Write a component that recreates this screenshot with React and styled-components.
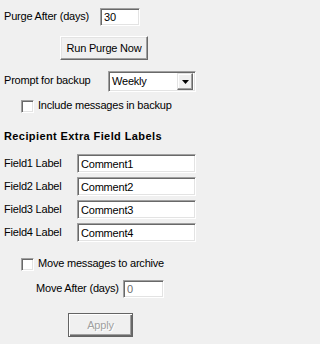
import React from 'react';
import styled, { createGlobalStyle } from 'styled-components';

const GlobalStyle = createGlobalStyle`
  html, body {
    margin: 0;
    padding: 0;
    background: #f0f0f0;
  }
  body {
    font-family: "Liberation Sans", Arial, sans-serif;
    font-size: 11px;
    color: #000;
  }
`;

const Panel = styled.div`
  width: 206px;
  height: 344px;
  box-sizing: border-box;
  padding: 8px 0 0 4px;
  background: #f0f0f0;
  letter-spacing: -0.2px;
  line-height: 13px;
  overflow: hidden;
`;

const Row = styled.div`
  display: flex;
  align-items: flex-start;
  margin-top: ${(p) => p.$top || 0}px;
  padding-left: ${(p) => p.$indent || 0}px;
`;

const Label = styled.span`
  flex: none;
  width: ${(p) => (p.$w ? `${p.$w}px` : 'auto')};
  padding-top: ${(p) => p.$pt || 0}px;
  white-space: nowrap;
`;

const Heading = styled.div`
  margin-top: 17px;
  font-weight: bold;
  letter-spacing: 0.4px;
  white-space: nowrap;
`;

const FieldList = styled.div`
  display: flex;
  flex-direction: column;
  gap: 4px;
  margin-top: 11px;
`;

const TextBox = styled.input`
  flex: none;
  box-sizing: border-box;
  width: ${(p) => p.$w}px;
  height: ${(p) => p.$h || 18}px;
  margin: 0;
  padding: 0 0 0 3px;
  border: 1px solid;
  border-color: #a0a0a0 #fff #fff #a0a0a0;
  box-shadow: inset 1px 1px 0 #696969, inset -1px -1px 0 #e3e3e3;
  background: #fff;
  color: ${(p) => (p.disabled ? '#6d6d6d' : '#000')};
  font: inherit;
  letter-spacing: inherit;
  outline: none;
`;

const Button = styled.button`
  flex: none;
  box-sizing: border-box;
  width: ${(p) => p.$w}px;
  height: 24px;
  margin: 0;
  padding: 0;
  border: 1px solid;
  border-color: #fff #696969 #696969 #fff;
  box-shadow: inset -1px -1px 0 #a0a0a0, inset 1px 1px 0 #e3e3e3;
  background: #f0f0f0;
  color: #000;
  font: inherit;
  letter-spacing: inherit;
`;

const DefaultButton = styled(Button)`
  border-color: #646464;
  box-shadow: inset 1px 1px 0 #fff, inset -1px -1px 0 #696969, inset -2px -2px 0 #a0a0a0;
  color: #a0a0a0;
  text-shadow: 1px 1px 0 #fff;
`;

const Combo = styled.div`
  flex: none;
  display: flex;
  align-items: center;
  box-sizing: border-box;
  width: 88px;
  height: 21px;
  border: 1px solid;
  border-color: #a0a0a0 #fff #fff #a0a0a0;
  box-shadow: inset 1px 1px 0 #696969, inset -1px -1px 0 #e3e3e3;
  background: #fff;
  padding: 1px 2px 1px 1px;
`;

const ComboValue = styled.span`
  flex: 1;
  padding-left: 2px;
`;

const ArrowButton = styled.span`
  flex: none;
  display: flex;
  align-items: center;
  justify-content: center;
  box-sizing: border-box;
  width: 16px;
  height: 17px;
  border: 1px solid;
  border-color: #e3e3e3 #696969 #696969 #e3e3e3;
  box-shadow: inset -1px -1px 0 #a0a0a0, inset 1px 1px 0 #fff;
  background: #f0f0f0;
`;

const CheckRow = styled.label`
  display: flex;
  align-items: flex-start;
  gap: 4px;
  margin-top: ${(p) => p.$top}px;
  padding-left: 17px;
  white-space: nowrap;
`;

const CheckBox = styled.span`
  flex: none;
  box-sizing: border-box;
  width: 13px;
  height: 13px;
  margin-top: 1px;
  border: 1px solid;
  border-color: #a0a0a0 #fff #fff #a0a0a0;
  box-shadow: inset 1px 1px 0 #696969, inset -1px -1px 0 #e3e3e3;
  background: #fff;
`;

const fields = ['Comment1', 'Comment2', 'Comment3', 'Comment4'];

export default function App() {
  return (
    <>
      <GlobalStyle />
      <Panel>
        <Row>
          <Label $w={96} $pt={2}>Purge After (days)</Label>
          <TextBox $w={40} defaultValue="30" readOnly />
        </Row>

        <Row $top={10} $indent={56}>
          <Button $w={88}>Run Purge Now</Button>
        </Row>

        <Row $top={11}>
          <Label $w={104} $pt={3}>Prompt for backup</Label>
          <Combo>
            <ComboValue>Weekly</ComboValue>
            <ArrowButton>
              <svg width="7" height="4" viewBox="0 0 7 4">
                <path d="M0 0h7L3.5 4z" fill="#000" />
              </svg>
            </ArrowButton>
          </Combo>
        </Row>

        <CheckRow $top={7}>
          <CheckBox />
          Include messages in backup
        </CheckRow>

        <Heading>Recipient Extra Field Labels</Heading>

        <FieldList>
          {fields.map((value, i) => (
            <Row key={value}>
              <Label $w={73} $pt={3}>Field{i + 1} Label</Label>
              <TextBox $w={119} $h={19} defaultValue={value} readOnly />
            </Row>
          ))}
        </FieldList>

        <CheckRow $top={15}>
          <CheckBox />
          Move messages to archive
        </CheckRow>

        <Row $top={9} $indent={32}>
          <Label $w={87} $pt={2}>Move After (days)</Label>
          <TextBox $w={41} defaultValue="0" disabled />
        </Row>

        <Row $top={15} $indent={64}>
          <DefaultButton $w={65} disabled>Apply</DefaultButton>
        </Row>
      </Panel>
    </>
  );
}
